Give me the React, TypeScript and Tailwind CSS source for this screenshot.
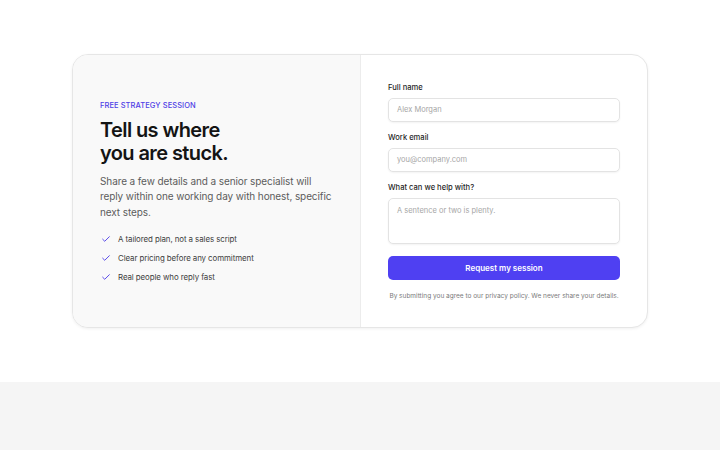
const points = [
  "A tailored plan, not a sales script",
  "Clear pricing before any commitment",
  "Real people who reply fast",
];

const Check = () => (
  <svg width="10" height="10" viewBox="0 0 24 24" fill="none" stroke="#5a4bea" strokeWidth="2.4" strokeLinecap="round" strokeLinejoin="round">
    <path d="M4 12.5l5 5L20 6.5" />
  </svg>
);

const Field = ({ label, placeholder }: { label: string; placeholder: string }) => (
  <div className="flex flex-col gap-[4px]">
    <label className="text-[7.6px] leading-[12px] font-medium text-[#1f1f1f]">{label}</label>
    <div className="h-[24px] rounded-[5px] border border-[#e3e3e3] bg-white shadow-[0_1px_2px_rgba(0,0,0,0.05)] px-[8px] flex items-center text-[7.5px] text-[#a6a6a6]">
      {placeholder}
    </div>
  </div>
);

export default function App() {
  return (
    <div className="w-[720px] h-[450px] bg-white flex flex-col" style={{ fontFamily: "Inter, 'Noto Sans', sans-serif" }}>
      <section className="flex justify-center pt-[54px] pb-[54px]">
        <div className="w-[576px] h-[274px] flex rounded-[16px] border border-[#e6e6e6] bg-white shadow-[0_1px_3px_rgba(0,0,0,0.06)] overflow-hidden">
          <div className="w-[288px] bg-[#f9f9f9] border-r border-[#ececec] pl-[27px] pr-[26px] flex flex-col justify-center">
            <p className="mt-[2px] text-[7.5px] leading-[10px] font-medium tracking-[0.01em] text-[#4f40e6]">FREE STRATEGY SESSION</p>
            <h1 className="mt-[8px] text-[20px] leading-[23px] font-semibold tracking-[-0.03em] text-[#141414]">
              Tell us where
              <br />
              you are stuck.
            </h1>
            <p className="mt-[9px] text-[10px] leading-[15.5px] tracking-[-0.01em] text-[#5c5c5c]">
              Share a few details and a senior specialist will reply within one working day with honest, specific next steps.
            </p>
            <ul className="mt-[13px] flex flex-col gap-[7px]">
              {points.map((p) => (
                <li key={p} className="flex items-center gap-[7px] text-[7.9px] leading-[12px] tracking-[-0.01em] text-[#3d3d3d]">
                  <span className="pl-[1px]"><Check /></span>
                  {p}
                </li>
              ))}
            </ul>
          </div>
          <div className="flex-1 px-[27px] pt-[27px] flex flex-col">
            <Field label="Full name" placeholder="Alex Morgan" />
            <div className="mt-[10px]">
              <Field label="Work email" placeholder="you@company.com" />
            </div>
            <div className="mt-[10px] flex flex-col gap-[4px]">
              <label className="text-[7.6px] leading-[12px] font-medium text-[#1f1f1f]">What can we help with?</label>
              <div className="h-[46px] rounded-[5px] border border-[#e3e3e3] bg-white shadow-[0_1px_2px_rgba(0,0,0,0.05)] px-[8px] pt-[6px] text-[7.5px] text-[#a6a6a6]">
                A sentence or two is plenty.
              </div>
            </div>
            <button className="mt-[12px] h-[24px] rounded-[5px] bg-[#4f40f2] text-white text-[8px] font-semibold">
              Request my session
            </button>
            <p className="mt-[11px] text-center text-[6.5px] leading-[10px] text-[#7a7a7a]">
              By submitting you agree to our privacy policy. We never share your details.
            </p>
          </div>
        </div>
      </section>
      <div className="flex-1 bg-[#f5f5f5]" />
    </div>
  );
}
